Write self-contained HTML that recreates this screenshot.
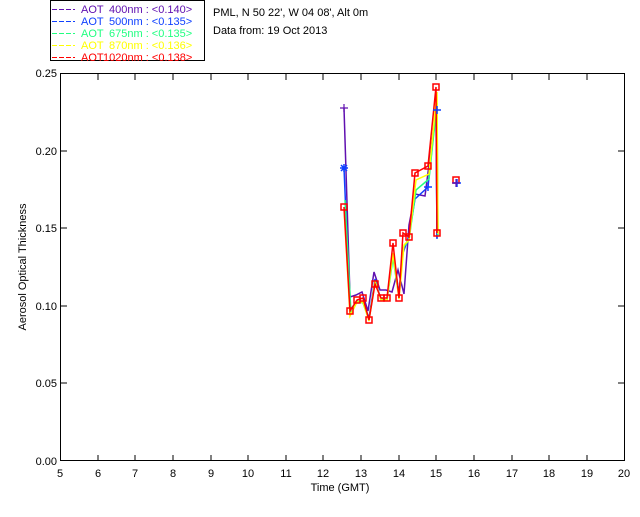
<!DOCTYPE html><html><head><style>body{margin:0;background:#fff;width:640px;height:512px;overflow:hidden}</style></head><body>
<svg width="640" height="512" xmlns="http://www.w3.org/2000/svg" font-family="Liberation Sans, sans-serif" font-size="11">
<rect x="50.5" y="0.5" width="154" height="60" fill="none" stroke="#000"/>
<g stroke-width="1" stroke-dasharray="5,2">
<path d="M52 9.5h23" stroke="#6010b0"/><path d="M52 21.5h23" stroke="#1040ff"/><path d="M52 33.5h23" stroke="#20ff80"/><path d="M52 45.5h23" stroke="#ffff00"/><path d="M52 57.5h23" stroke="#ff0000"/>
</g>
<g font-size="11">
<text y="13" fill="#6010b0"><tspan x="81">AOT</tspan><tspan x="109">400nm : &lt;0.140&gt;</tspan></text>
<text y="25" fill="#1040ff"><tspan x="81">AOT</tspan><tspan x="109">500nm : &lt;0.135&gt;</tspan></text>
<text y="37" fill="#20ff80"><tspan x="81">AOT</tspan><tspan x="109">675nm : &lt;0.135&gt;</tspan></text>
<text y="49" fill="#ffff00"><tspan x="81">AOT</tspan><tspan x="109">870nm : &lt;0.136&gt;</tspan></text>
<text y="61" fill="#ff0000"><tspan x="81">AOT</tspan><tspan x="103">1020nm : &lt;0.138&gt;</tspan></text>
</g>
<text x="213" y="16">PML, N 50 22', W 04 08', Alt 0m</text>
<text x="213" y="34">Data from: 19 Oct 2013</text>
<rect x="60.5" y="73.5" width="564" height="387" fill="none" stroke="#000"/>
<g stroke="#000">
<path d="M98 461v-6M135 461v-6M173 461v-6M211 461v-6M248 461v-6M286 461v-6M323 461v-6M361 461v-6M399 461v-6M436 461v-6M474 461v-6M512 461v-6M549 461v-6M587 461v-6M98 74v6M135 74v6M173 74v6M211 74v6M248 74v6M286 74v6M323 74v6M361 74v6M399 74v6M436 74v6M474 74v6M512 74v6M549 74v6M587 74v6M61 383h6M61 306h6M61 228h6M61 151h6M624 383h-6M624 306h-6M624 228h-6M624 151h-6"/>
</g>
<g text-anchor="middle" font-size="11">
<text x="60" y="477">5</text><text x="98" y="477">6</text><text x="135" y="477">7</text><text x="173" y="477">8</text><text x="211" y="477">9</text><text x="248" y="477">10</text><text x="286" y="477">11</text><text x="323" y="477">12</text><text x="361" y="477">13</text><text x="399" y="477">14</text><text x="436" y="477">15</text><text x="474" y="477">16</text><text x="512" y="477">17</text><text x="549" y="477">18</text><text x="587" y="477">19</text><text x="624" y="477">20</text>
<text x="340" y="491">Time (GMT)</text>
</g>
<g text-anchor="end" font-size="11">
<text x="57" y="465">0.00</text><text x="57" y="387">0.05</text><text x="57" y="310">0.10</text><text x="57" y="232">0.15</text><text x="57" y="155">0.20</text><text x="57" y="77">0.25</text>
</g>
<text transform="translate(26,267) rotate(-90)" text-anchor="middle">Aerosol Optical Thickness</text>
<g fill="none" stroke-width="1.5">
<polyline stroke="#6010b0" points="344,108 350,297 356,295 362,292 368,311 374,272 380,290 386,290 392,292 398,270 404,294 409,225 415,194 425,196 436,110 437,238"/>
<polyline stroke="#1040ff" points="344,168 350,310 357,302 363,302 369,318 375,279 381,300 387,300 393,254 399,293 403,253 409,236 415,199 428,187 436,110 437,239"/>
<polyline stroke="#20ff80" points="345,200 351,314 357,301 363,303 369,320 375,282 381,299 387,300 393,258 399,297 403,248 409,240 416,190 429,179 437,103 438,236"/>
<polyline stroke="#ffff00" points="344,209 350,316 357,302 363,302 369,321 375,281 381,300 387,300 393,253 399,299 404,245 409,240 416,180 429,174 437,92 438,234"/>
<polyline stroke="#ff0000" points="344,207 350,311 357,300 363,298 369,320 375,284 381,298 387,298 393,243 399,298 403,233 409,237 415,173 428,166 436,87 437,233"/>
</g>
<g fill="none" stroke="#ff0000" stroke-width="1.5">
<rect x="341" y="204" width="6" height="6"/><rect x="347" y="308" width="6" height="6"/><rect x="354" y="297" width="6" height="6"/><rect x="360" y="295" width="6" height="6"/><rect x="366" y="317" width="6" height="6"/><rect x="372" y="281" width="6" height="6"/><rect x="378" y="295" width="6" height="6"/><rect x="384" y="295" width="6" height="6"/><rect x="390" y="240" width="6" height="6"/><rect x="396" y="295" width="6" height="6"/><rect x="400" y="230" width="6" height="6"/><rect x="406" y="234" width="6" height="6"/><rect x="412" y="170" width="6" height="6"/><rect x="425" y="163" width="6" height="6"/><rect x="433" y="84" width="6" height="6"/><rect x="434" y="230" width="6" height="6"/><rect x="453" y="177" width="6" height="6"/>
</g>
<g stroke="#1040ff" stroke-width="1.5"><path d="M340 168h8M344 164v8M341 165l6 6M347 165l-6 6M433 110h8M437 106v8M453 183h8M457 179v8M424 187h8M428 183v8"/></g>
<g stroke="#6010b0" stroke-width="1.2"><path d="M340 108h8M344 104v8M452 183h8M456 179v8"/></g>
</svg>
</body></html>
